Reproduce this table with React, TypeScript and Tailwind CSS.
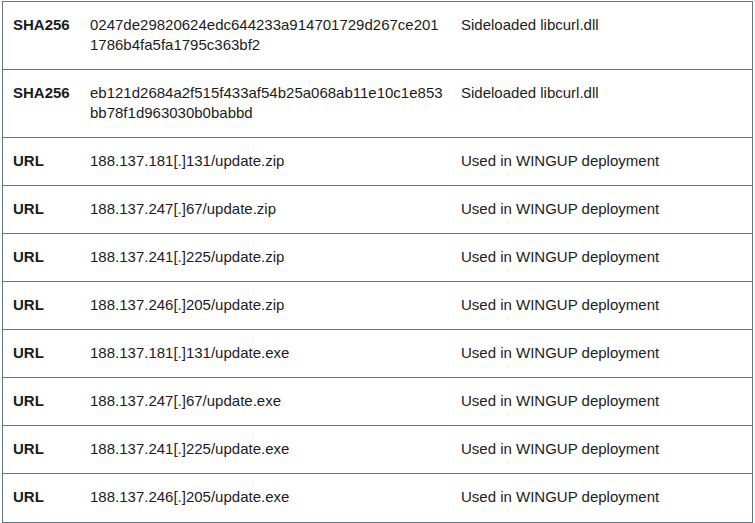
import React from 'react';

type Row = {
  kind: string;
  value: string[];
  note: string;
};

const rows: Row[] = [
  {
    kind: 'SHA256',
    value: ['0247de29820624edc644233a914701729d267ce201', '1786b4fa5fa1795c363bf2'],
    note: 'Sideloaded libcurl.dll',
  },
  {
    kind: 'SHA256',
    value: ['eb121d2684a2f515f433af54b25a068ab11e10c1e853', 'bb78f1d963030b0babbd'],
    note: 'Sideloaded libcurl.dll',
  },
  { kind: 'URL', value: ['188.137.181[.]131/update.zip'], note: 'Used in WINGUP deployment' },
  { kind: 'URL', value: ['188.137.247[.]67/update.zip'], note: 'Used in WINGUP deployment' },
  { kind: 'URL', value: ['188.137.241[.]225/update.zip'], note: 'Used in WINGUP deployment' },
  { kind: 'URL', value: ['188.137.246[.]205/update.zip'], note: 'Used in WINGUP deployment' },
  { kind: 'URL', value: ['188.137.181[.]131/update.exe'], note: 'Used in WINGUP deployment' },
  { kind: 'URL', value: ['188.137.247[.]67/update.exe'], note: 'Used in WINGUP deployment' },
  { kind: 'URL', value: ['188.137.241[.]225/update.exe'], note: 'Used in WINGUP deployment' },
  { kind: 'URL', value: ['188.137.246[.]205/update.exe'], note: 'Used in WINGUP deployment' },
];

export default function App() {
  return (
    <div className="w-[755px] h-[523px] bg-white pt-px pl-[2px] font-['Liberation_Sans',Arial,sans-serif] text-[15px] leading-[20px] text-[#1c1c1c]">
      <div className="w-[751px] border border-[#5f7880]">
        {rows.map((row, i) => (
          <div
            key={i}
            className={`flex pt-[13px] ${i < rows.length - 1 ? 'border-b border-[#5f7880]' : ''} ${
              row.value.length > 1 ? 'h-[68px]' : 'h-[48px]'
            }`}
          >
            <div className="w-[87px] shrink-0 pl-[10px] font-bold">{row.kind}</div>
            <div className="w-[371px] shrink-0">
              {row.value.map((line, j) => (
                <div key={j}>{line}</div>
              ))}
            </div>
            <div className="flex-1">{row.note}</div>
          </div>
        ))}
      </div>
    </div>
  );
}
